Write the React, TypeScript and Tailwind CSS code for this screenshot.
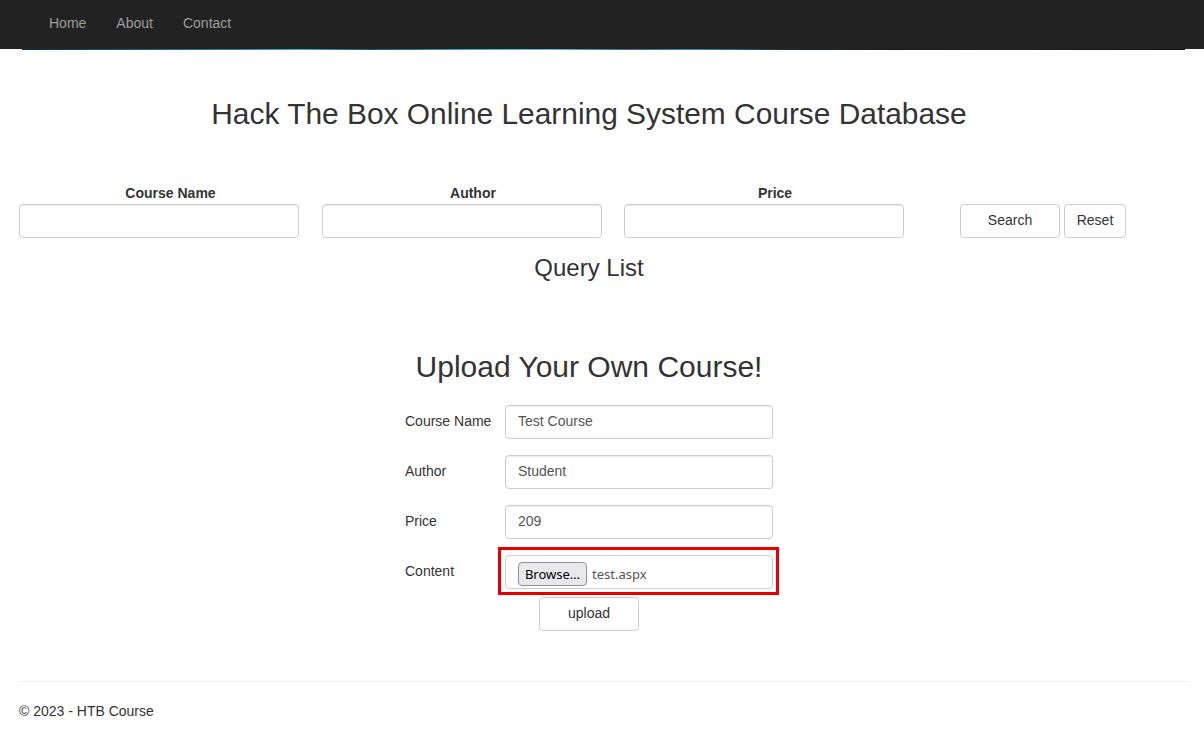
import React from "react";

const inputCls =
  "h-[34px] rounded-[4px] border border-[#ccc] bg-white px-[12px] text-[14px] text-[#555] shadow-[inset_0_1px_1px_rgba(0,0,0,0.075)] outline-none";
const btnCls =
  "h-[34px] rounded-[4px] border border-[#ccc] bg-white pb-[2px] text-[14px] text-[#333] flex items-center justify-center";

function Row({ label, value }: { label: string; value: string }) {
  return (
    <div className="flex h-[34px] items-start">
      <div className="w-[100px] pt-[6px] leading-[20px]">{label}</div>
      <div className={inputCls + " w-[268px] flex items-center pb-[3px] leading-[20px]"}>{value}</div>
    </div>
  );
}

export default function App() {
  return (
    <div
      className="min-h-[741px] bg-white text-[14px] leading-[20px] text-[#333]"
      style={{ fontFamily: '"Liberation Sans", Arial, sans-serif' }}
    >
      <nav className="flex h-[49px] items-center bg-[#222] pb-[4px] pl-[34px]">
        <a className="px-[15px] text-[#9d9d9d]">Home</a>
        <a className="px-[15px] text-[#9d9d9d]">About</a>
        <a className="px-[15px] text-[#9d9d9d]">Contact</a>
      </nav>
      <div className="flex h-px">
        <div className="ml-[22px] w-[1163px] bg-[linear-gradient(90deg,#0d2d52_0%,#1a5a8a_10%,#2a7fb0_18%,#3fb0d0_24%,#1c4f80_30%,#3aa9c9_38%,#5fc0d8_45%,#4a6a80_52%,#2e90b8_58%,#1a2a3a_66%,#131c24_75%,#1a2228_85%,#111_100%)]" />
      </div>

      <div className="ml-[19px] w-[1140px]">
        <h2 className="mt-[47px] text-center text-[29.9px] leading-[33px] font-normal">
          Hack The Box Online Learning System Course Database
        </h2>

        <div className="mt-[53px] flex">
          <div className="flex w-[303px] flex-col">
            <div className="text-center font-bold leading-[20px]">Course Name</div>
            <div className={inputCls + " mt-px w-[280px]"} />
          </div>
          <div className="flex w-[302px] flex-col">
            <div className="text-center font-bold leading-[20px]">Author</div>
            <div className={inputCls + " mt-px w-[280px]"} />
          </div>
          <div className="flex w-[302px] flex-col">
            <div className="text-center font-bold leading-[20px]">Price</div>
            <div className={inputCls + " mt-px w-[280px]"} />
          </div>
          <div className="ml-[34px] mt-[21px] flex gap-[4px]">
            <button className={btnCls + " w-[100px]"}>Search</button>
            <button className={btnCls + " w-[62px]"}>Reset</button>
          </div>
        </div>

        <h3 className="mt-[17px] text-center text-[24px] leading-[26px] font-normal">Query List</h3>

        <h2 className="mt-[69px] text-center text-[30px] leading-[33px] font-normal">
          Upload Your Own Course!
        </h2>

        <div className="mx-auto mt-[22px] flex w-[368px] flex-col gap-[16px]">
          <Row label="Course Name" value="Test Course" />
          <Row label="Author" value="Student" />
          <Row label="Price" value="209" />
          <div className="flex h-[34px] items-start">
            <div className="w-[100px] pt-[6px] leading-[20px]">Content</div>
            <div className="relative w-[268px]">
              <div
                className="flex h-[34px] items-center rounded-[4px] border border-[#ccc] bg-white pl-[12px] pt-[4px] text-[13px] text-[#555]"
                style={{ fontFamily: '"Noto Sans", sans-serif' }}
              >
                <span className="flex h-[24px] w-[69px] items-center justify-center rounded-[4px] border border-[#8f8f9d] bg-[#e9e9ed] text-[13px] text-black">
                  Browse…
                </span>
                <span className="ml-[5px]">test.aspx</span>
              </div>
              <div className="pointer-events-none absolute -bottom-[6px] -left-[7px] -right-[6px] -top-[8px] border-[3px] border-[#e80000]" />
            </div>
          </div>
        </div>
        <div className="mt-[8px] flex justify-center">
          <button className={btnCls + " w-[100px]"}>upload</button>
        </div>
      </div>

      <div className="ml-[19px] mt-[50px] w-[1170px] border-t border-[#eee]" />
      <footer className="ml-[19px] mt-[19px] leading-[20px]">© 2023 - HTB Course</footer>
    </div>
  );
}
